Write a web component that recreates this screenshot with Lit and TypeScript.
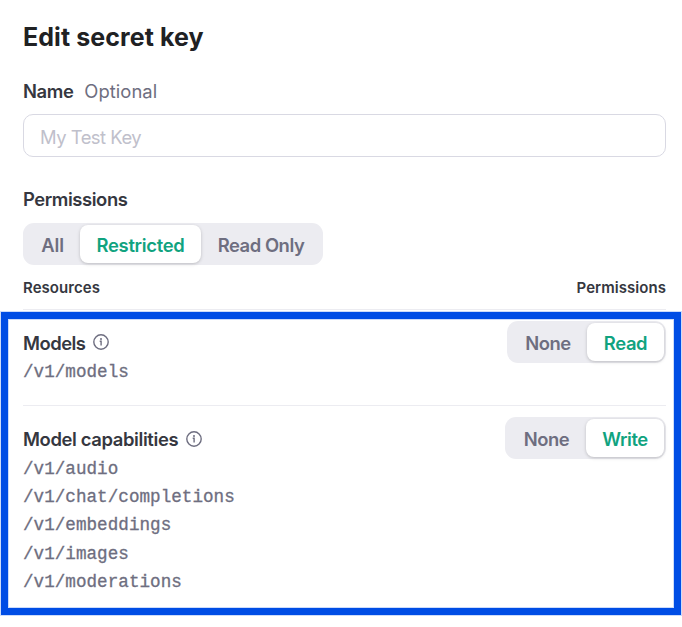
import { LitElement, html, css, svg } from "lit";
import { customElement, property } from "lit/decorators.js";
import { classMap } from "lit/directives/class-map.js";
import { styleMap } from "lit/directives/style-map.js";

interface Segment {
  label: string;
  width: number;
  spacing: number;
}

interface Resource {
  title: string;
  spacing: number;
  paths: string[];
  options: Segment[];
  selected: string;
}

@customElement("segmented-control")
class SegmentedControl extends LitElement {
  @property({ attribute: false }) options: Segment[] = [];
  @property() selected = "";

  static styles = css`
    :host {
      display: inline-flex;
      flex: none;
      box-sizing: border-box;
      height: 42px;
      padding: 2px;
      border-radius: 11px;
      background: #ececf1;
    }
    .segment {
      box-sizing: border-box;
      height: 38px;
      padding: 2px 0 0;
      border: 0;
      border-radius: 8px;
      background: transparent;
      color: #6e6e80;
      font: 600 18.4px/36px Inter, "Liberation Sans", sans-serif;
      text-align: center;
      white-space: nowrap;
    }
    .active {
      background: #fff;
      color: #10a37f;
      box-shadow: 0 1px 3px rgba(0, 0, 0, 0.15), 0 1px 5px rgba(0, 0, 0, 0.06);
    }
  `;

  render() {
    return this.options.map(
      (o) => html`<button
        class=${classMap({ segment: true, active: o.label === this.selected })}
        style=${styleMap({ width: `${o.width}px`, letterSpacing: `${o.spacing}px` })}
      >${o.label}</button>`
    );
  }
}

const infoIcon = svg`
  <circle cx="8" cy="8" r="7.2" fill="none" stroke="currentColor" stroke-width="1.4" />
  <path d="M6.7 7.3H8.1V11.5" fill="none" stroke="currentColor" stroke-width="1.4" />
  <circle cx="8" cy="4.9" r="1" fill="currentColor" />
`;

const resources: Resource[] = [
  {
    title: "Models",
    spacing: -0.5,
    paths: ["/v1/models"],
    options: [
      { label: "None", width: 78, spacing: -0.4 },
      { label: "Read", width: 77, spacing: -0.4 },
    ],
    selected: "Read",
  },
  {
    title: "Model capabilities",
    spacing: -0.37,
    paths: ["/v1/audio", "/v1/chat/completions", "/v1/embeddings", "/v1/images", "/v1/moderations"],
    options: [
      { label: "None", width: 79, spacing: -0.4 },
      { label: "Write", width: 78, spacing: -0.4 },
    ],
    selected: "Write",
  },
];

const scopes: Segment[] = [
  { label: "All", width: 55, spacing: -0.1 },
  { label: "Restricted", width: 121, spacing: -0.3 },
  { label: "Read Only", width: 120, spacing: -0.45 },
];

@customElement("app-root")
class AppRoot extends LitElement {
  static styles = css`
    :host {
      display: block;
      position: relative;
      box-sizing: border-box;
      width: 682px;
      height: 627px;
      padding: 20px 16px 0 23px;
      overflow: hidden;
      background: #fff;
      color: #353740;
      font: 600 18.4px/28px Inter, "Liberation Sans", sans-serif;
      white-space: nowrap;
    }
    .heading {
      margin: 0;
      color: #202123;
      font-size: 25px;
      font-weight: 700;
      line-height: 34px;
      letter-spacing: 0.08px;
    }
    .label {
      display: flex;
      gap: 11px;
      margin-top: 23px;
      letter-spacing: -0.4px;
    }
    .optional {
      color: #6e6e80;
      font-weight: 400;
      letter-spacing: 0.05px;
    }
    .field {
      display: block;
      box-sizing: border-box;
      width: 643px;
      height: 43px;
      margin-top: 9px;
      padding: 3px 16px 0;
      border: 1px solid #d9d9e3;
      border-radius: 10px;
      outline: none;
      background: #fff;
      font: 400 18.4px Inter, "Liberation Sans", sans-serif;
      letter-spacing: -0.5px;
    }
    .field::placeholder {
      color: #c0c0cb;
      opacity: 1;
    }
    .permissions {
      margin: 28px 0 10px;
      letter-spacing: -0.42px;
    }
    .scopes {
      display: flex;
    }
    .columns {
      display: flex;
      justify-content: space-between;
      height: 44px;
      border-bottom: 1px solid #ececf1;
      font-size: 15px;
      line-height: 45px;
      letter-spacing: 0.05px;
    }
    .resource {
      display: flex;
      justify-content: space-between;
      align-items: flex-start;
      box-sizing: border-box;
      height: 96px;
      padding-top: 11px;
      border-bottom: 1px solid #ececf1;
    }
    .resource.last {
      height: 205px;
      border: 0;
    }
    .title {
      display: flex;
      align-items: center;
      gap: 7.5px;
      height: 28px;
      padding: 8px 0 1.4px;
    }
    .icon {
      width: 16px;
      height: 16px;
      margin-top: -2px;
      color: #6e6e80;
    }
    .last .icon {
      margin-top: -1px;
    }
    .last .title {
      padding-bottom: 1.9px;
    }
    .path {
      color: #6e6e80;
      font: 400 17.6px/28.2px "Liberation Mono", monospace;
      letter-spacing: 0.03px;
      -webkit-text-stroke: 0.3px #6e6e80;
    }
    .highlight {
      position: absolute;
      left: 1px;
      top: 312px;
      box-sizing: border-box;
      width: 680px;
      height: 303px;
      border: 7px solid #004de5;
      box-shadow: 0 0 0 1px rgba(0, 77, 229, 0.2), inset 0 0 0 1px rgba(0, 77, 229, 0.2);
      pointer-events: none;
    }
  `;

  render() {
    return html`
      <h1 class="heading">Edit secret key</h1>
      <div class="label"><span>Name</span><span class="optional">Optional</span></div>
      <input class="field" placeholder="My Test Key" />
      <div class="permissions">Permissions</div>
      <div class="scopes">
        <segmented-control .options=${scopes} selected="Restricted"></segmented-control>
      </div>
      <div class="columns"><span>Resources</span><span>Permissions</span></div>
      ${resources.map(
        (r, i) => html`<section class=${classMap({ resource: true, last: i === resources.length - 1 })}>
          <div>
            <div class="title">
              <span style=${styleMap({ letterSpacing: `${r.spacing}px` })}>${r.title}</span>
              <svg class="icon" viewBox="0 0 16 16">${infoIcon}</svg>
            </div>
            ${r.paths.map((p) => html`<div class="path">${p}</div>`)}
          </div>
          <segmented-control .options=${r.options} selected=${r.selected}></segmented-control>
        </section>`
      )}
      <div class="highlight"></div>
    `;
  }
}
